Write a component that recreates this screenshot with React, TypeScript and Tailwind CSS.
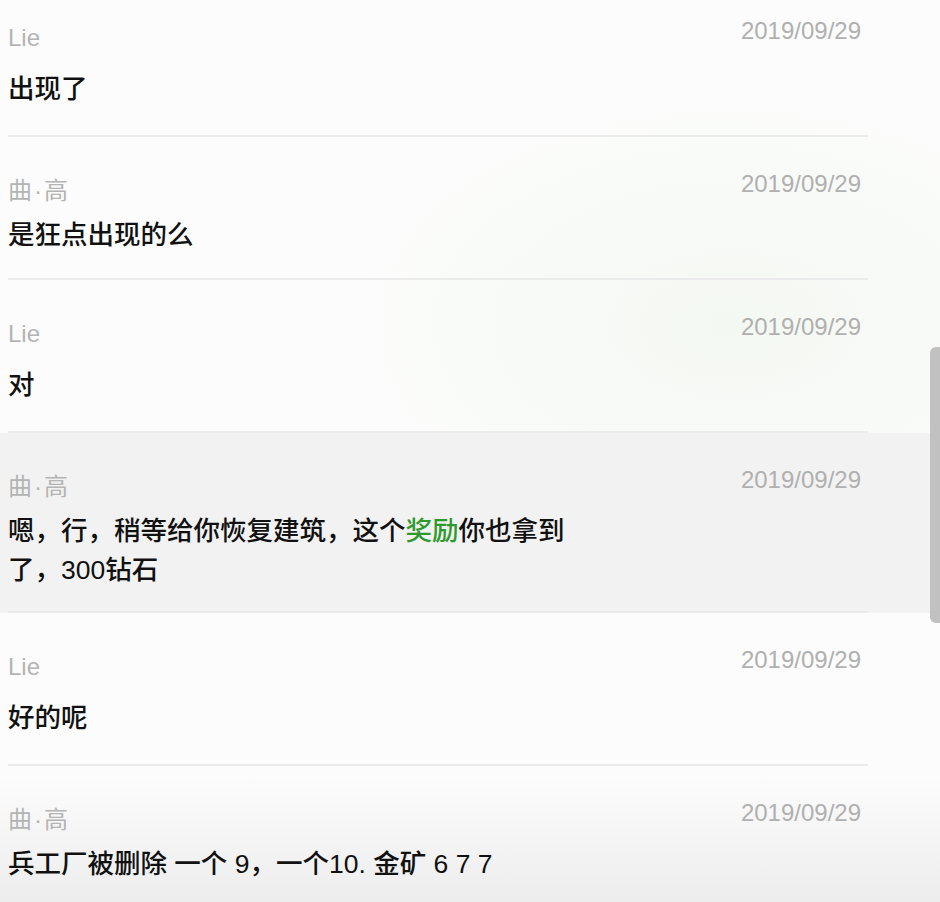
import React from "react";

type Msg = {
  name: React.ReactNode;
  date: string;
  body: React.ReactNode;
  lie: boolean;
  highlight?: boolean;
  first?: boolean;
};

const Qu = (
  <>
    曲<span className="mx-[2px]">·</span>高
  </>
);

const msgs: Msg[] = [
  { name: "Lie", date: "2019/09/29", body: "出现了", lie: true, first: true },
  { name: Qu, date: "2019/09/29", body: "是狂点出现的么", lie: false },
  { name: "Lie", date: "2019/09/29", body: "对", lie: true },
  {
    name: Qu,
    date: "2019/09/29",
    body: (
      <>
        嗯，行，稍等给你恢复建筑，这个<span className="text-[#2e9a2e]">奖励</span>你也拿到了，300钻石
      </>
    ),
    lie: false,
    highlight: true,
  },
  { name: "Lie", date: "2019/09/29", body: "好的呢", lie: true },
  { name: Qu, date: "2019/09/29", body: "兵工厂被删除 一个 9，一个10. 金矿 6 7 7", lie: false },
];

function Row({ m }: { m: Msg }) {
  const pb = m.highlight ? "pb-[21px]" : m.lie ? "pb-[26px]" : "pb-[23px]";
  return (
    <div className={m.highlight ? "w-full bg-[#f2f2f2]" : "w-full"}>
      <div
        className={
          "ml-[8px] w-[860px] border-b-2 border-[#ebebeb] " + (m.first ? "pt-[16px] " : "pt-[32px] ") + pb
        }
      >
        <div className="flex items-start justify-between pr-[7px]">
          <div className="mt-[7px] text-[24px] leading-[30px] text-[#b4b4b4]">{m.name}</div>
          <div className="text-[24px] leading-[30px] text-[#b0b0b0]">{m.date}</div>
        </div>
        <div
          className={
            "max-w-[570px] text-[26.5px] font-medium leading-[39px] text-[#111111] " +
            (m.lie ? "mt-[17px]" : "mt-[10px]")
          }
        >
          {m.body}
        </div>
      </div>
    </div>
  );
}

export default function App() {
  return (
    <div
      className="relative h-[902px] w-[940px] overflow-hidden bg-[#fbfcfb] bg-[linear-gradient(to_bottom,rgba(251,252,251,0)_86%,#ededed_100%),radial-gradient(ellipse_40%_25%_at_78%_36%,#f4f8f2_0%,rgba(251,252,251,0)_100%)]"
      style={{ fontFamily: '"Liberation Sans", "Noto Sans CJK SC", sans-serif' }}
    >
      <div className="flex flex-col">
        {msgs.map((m, i) => (
          <Row key={i} m={m} />
        ))}
      </div>
      <div className="absolute right-0 top-[347px] h-[276px] w-[10px] rounded-l-[6px] bg-[#c1c1c1]" />
    </div>
  );
}
